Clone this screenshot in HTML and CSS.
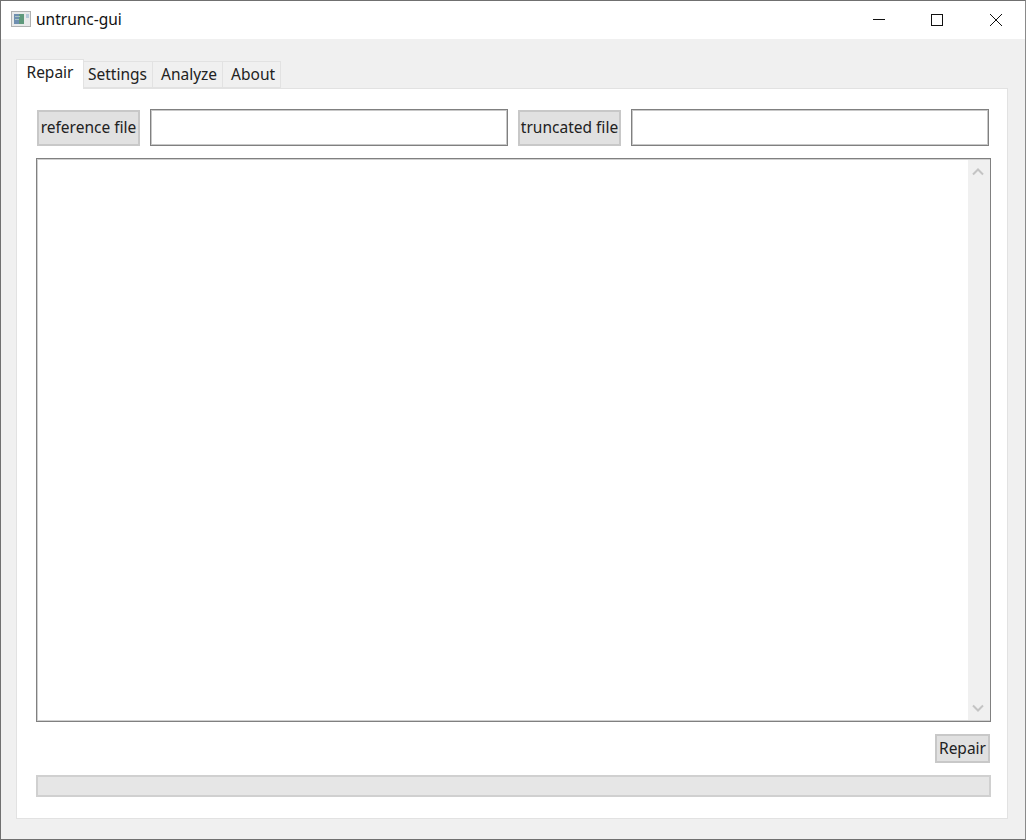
FILE: index.html
```html
<!DOCTYPE html>
<html lang="en">
<head>
    <meta charset="UTF-8">
    <title>untrunc-gui</title>
    <link rel="stylesheet" href="styles.css">
</head>
<body>
    <div class="window">
        <div class="titlebar">
            <svg class="app-icon" width="20" height="16" viewBox="0 0 20 16">
                <rect x="0.5" y="0.5" width="19" height="15" fill="#e8eaea" stroke="#b0b2b2"/>
                <rect x="3" y="3" width="5" height="10" fill="#6f8fb0"/>
                <rect x="8" y="3" width="5" height="10" fill="#5f9a7c"/>
                <rect x="4" y="5" width="5" height="1" fill="#a8c4c0"/>
                <rect x="4" y="8" width="4" height="1" fill="#a8c4c0"/>
                <rect x="15" y="3" width="3" height="4" fill="#b4c8d8"/>
            </svg>
            <span class="title">untrunc-gui</span>
            <div class="controls">
                <svg class="ctl" width="58" height="38" viewBox="0 0 58 38"><path d="M22 18.5h12" stroke="#111" fill="none"/></svg>
                <svg class="ctl" width="58" height="38" viewBox="0 0 58 38"><rect x="22.5" y="13.5" width="11" height="11" stroke="#111" fill="none"/></svg>
                <svg class="ctl" width="58" height="38" viewBox="0 0 58 38"><path d="M23 13l12 12M35 13l-12 12" stroke="#111" fill="none"/></svg>
            </div>
        </div>
        <div class="main">
            <div class="tabs">
                <div class="tab active">Repair</div>
                <div class="tab settings">Settings</div>
                <div class="tab">Analyze</div>
                <div class="tab">About</div>
            </div>
            <div class="pane">
                <div class="file-row">
                    <button class="btn file-btn">reference file</button>
                    <input class="file-input" type="text">
                    <button class="btn file-btn">truncated file</button>
                    <input class="file-input" type="text">
                </div>
                <div class="log">
                    <div class="scrollbar">
                        <svg width="22" height="22" viewBox="0 0 22 22"><path d="M5 14.5l5-5 5 5" stroke="#c4c4c4" stroke-width="2" fill="none"/></svg>
                        <svg width="22" height="22" viewBox="0 0 22 22"><path d="M5 7.5l5 5 5-5" stroke="#c4c4c4" stroke-width="2" fill="none"/></svg>
                    </div>
                </div>
                <div class="actions">
                    <button class="btn repair-btn">Repair</button>
                </div>
                <div class="progress"></div>
            </div>
        </div>
    </div>
</body>
</html>
```

FILE: styles.css
```css
html, body {
    margin: 0;
    padding: 0;
}
body {
    font-family: "Noto Sans", "Open Sans", sans-serif;
    font-size: 15.5px;
    color: #222;
    overflow: hidden;
}
.window {
    box-sizing: border-box;
    width: 1026px;
    height: 840px;
    border: 1px solid #707070;
    border-right-color: #8a8a8a;
    background-color: #f0f0f0;
    display: flex;
    flex-direction: column;
}
.titlebar {
    height: 38px;
    background-color: white;
    display: flex;
    align-items: center;
    padding-left: 10px;
    color: #111;
}
.app-icon {
    margin: 0 5px 2px 0;
}
.title {
    flex: 1;
    margin-bottom: 2px;
}
.controls {
    display: flex;
}
.ctl {
    display: block;
}
.main {
    flex: 1;
    padding: 20px 17px 20px 15px;
    display: flex;
    flex-direction: column;
}
.tabs {
    display: flex;
    align-items: flex-end;
    height: 29px;
    position: relative;
    z-index: 1;
}
.tab {
    box-sizing: content-box;
    height: 25px;
    line-height: 24px;
    padding: 0 5px 0 8px;
    border: 1px solid #e2e2e2;
    border-left: none;
}
.tab.settings {
    padding: 0 5px 0 4px;
}
.tab.active {
    box-sizing: border-box;
    height: 30px;
    margin-bottom: -1px;
    width: 68px;
    line-height: 24px;
    text-align: center;
    background-color: white;
    border-left: 1px solid #e2e2e2;
    border-bottom: none;
    padding: 0;
}
.pane {
    flex: 1;
    background-color: white;
    border: 1px solid #e2e2e2;
    padding: 20px 16px 21px 19px;
    display: flex;
    flex-direction: column;
}
.file-row {
    display: flex;
    align-items: center;
    gap: 10px;
    height: 37px;
    margin-bottom: 12px;
    padding: 0 2px 0 1px;
}
.btn {
    box-sizing: border-box;
    font-family: inherit;
    font-size: 15.5px;
    color: #222;
    background-color: #e1e1e1;
    border: 2px solid #c8c8c8;
    padding: 0 0 2px;
}
.file-btn {
    width: 103px;
    height: 36px;
    flex: none;
}
.file-input {
    box-sizing: border-box;
    flex: 1;
    min-width: 0;
    height: 37px;
    border: 1px solid #808080;
    box-shadow: inset 0 0 0 1px #c8c8c8;
    background-color: white;
}
.log {
    box-sizing: border-box;
    height: 564px;
    border: 1px solid #808080;
    box-shadow: inset 0 0 0 1px #d0d0d0;
    display: flex;
    justify-content: flex-end;
    padding: 1px 0 1px 1px;
}
.scrollbar {
    width: 22px;
    background-color: #f0f0f0;
    display: flex;
    flex-direction: column;
    justify-content: space-between;
}
.scrollbar svg {
    display: block;
}
.actions {
    display: flex;
    justify-content: flex-end;
    margin-top: 12px;
    padding-right: 1px;
}
.repair-btn {
    width: 55px;
    height: 29px;
}
.progress {
    box-sizing: border-box;
    height: 22px;
    margin-top: 12px;
    background-color: #e6e6e6;
    border: 2px solid #d0d0d0;
}
```
